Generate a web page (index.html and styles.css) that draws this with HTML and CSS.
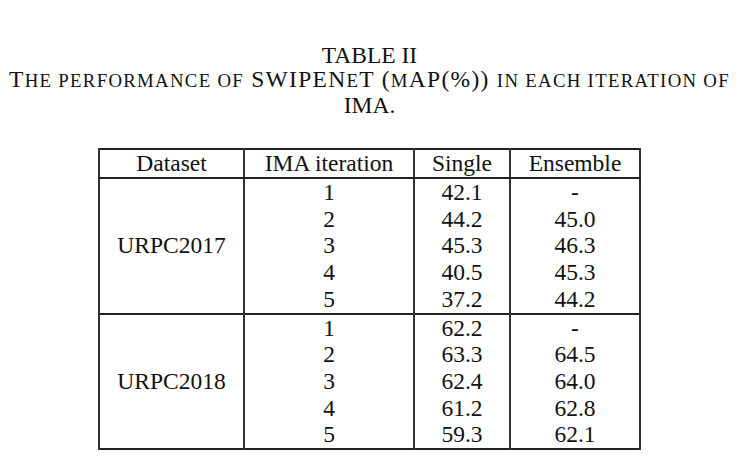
FILE: index.html
```html
<!DOCTYPE html>
<html>
<head>
<meta charset="utf-8">
<link rel="stylesheet" href="styles.css">
</head>
<body>
<div class="caption">
  <div class="line">TABLE II</div>
  <div class="line wide">T<span class="sm">he performance of</span> SWIPEN<span class="sm">e</span>T (<span class="sm">m</span>AP(%)) <span class="sm">in each iteration of</span></div>
  <div class="line">IMA.</div>
</div>
<table class="data">
  <colgroup>
    <col class="c1"><col class="c2"><col class="c3"><col class="c4">
  </colgroup>
  <thead>
    <tr class="head"><th>Dataset</th><th>IMA iteration</th><th>Single</th><th>Ensemble</th></tr>
  </thead>
  <tbody>
    <tr class="first"><td rowspan="5">URPC2017</td><td>1</td><td>42.1</td><td>-</td></tr>
    <tr><td>2</td><td>44.2</td><td>45.0</td></tr>
    <tr><td>3</td><td>45.3</td><td>46.3</td></tr>
    <tr><td>4</td><td>40.5</td><td>45.3</td></tr>
    <tr><td>5</td><td>37.2</td><td>44.2</td></tr>
  </tbody>
  <tbody>
    <tr class="first"><td rowspan="5">URPC2018</td><td>1</td><td>62.2</td><td>-</td></tr>
    <tr><td>2</td><td>63.3</td><td>64.5</td></tr>
    <tr><td>3</td><td>62.4</td><td>64.0</td></tr>
    <tr><td>4</td><td>61.2</td><td>62.8</td></tr>
    <tr><td>5</td><td>59.3</td><td>62.1</td></tr>
  </tbody>
</table>
</body>
</html>
```
FILE: styles.css
```css
html, body {
  margin: 0;
  padding: 0;
  background: #fff;
}
body {
  font-family: "Liberation Serif", "Times New Roman", serif;
  font-size: 23.5px;
  color: #111;
}
.caption {
  margin-top: 43px;
  text-align: center;
  line-height: 24px;
  white-space: nowrap;
}
.wide {
  letter-spacing: 1.3px;
}
.sm {
  text-transform: uppercase;
  font-size: 0.8em;
}
.data {
  margin: 31px auto 0;
  border-collapse: collapse;
  table-layout: fixed;
  width: 541px;
  border: 2px solid #222;
}
.c1 { width: 145px; }
.c2 { width: 170px; }
.c3 { width: 96px; }
.c4 { width: 130px; }
.data th,
.data td {
  padding: 0;
  text-align: center;
  font-weight: normal;
  line-height: 26.7px;
  border-left: 2px solid #333;
  border-right: 2px solid #333;
}
.data tr.head th {
  height: 27px;
  line-height: 27px;
  border-bottom: 2px solid #222;
}
.data tbody + tbody tr.first td {
  border-top: 2px solid #222;
}
```
